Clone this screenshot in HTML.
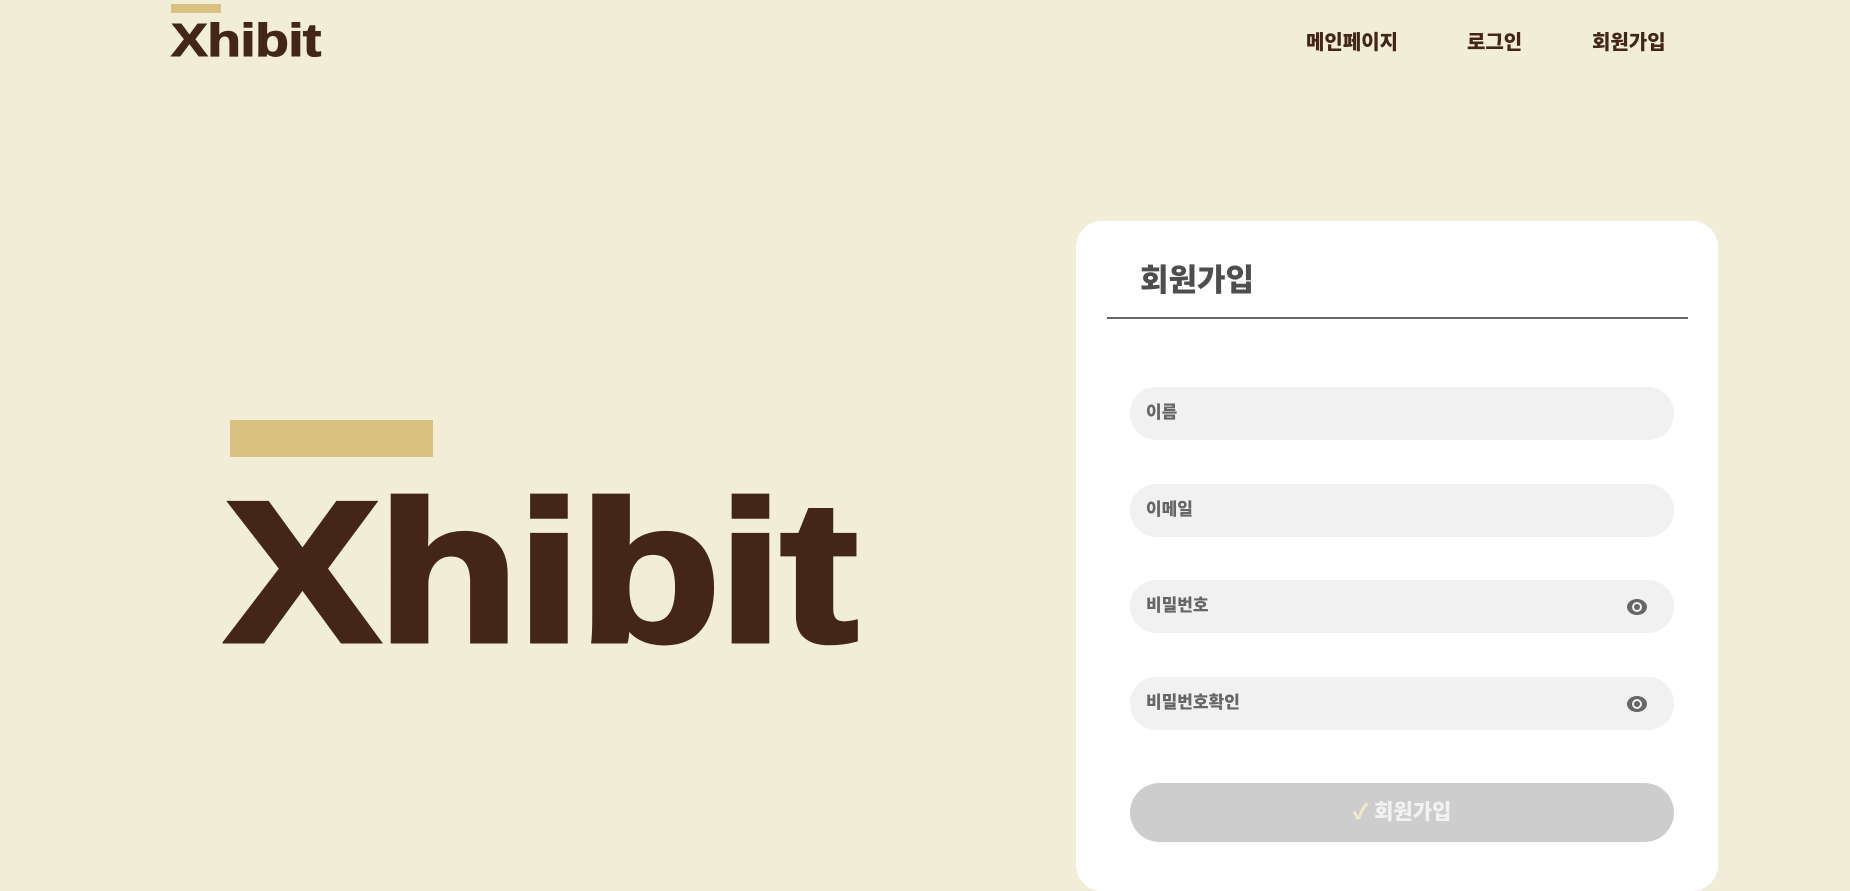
<!DOCTYPE html>
<html><head><meta charset="utf-8"><style>
*{margin:0;padding:0;box-sizing:border-box}
body{width:1850px;height:887px;background:#f2edd7;position:relative;overflow:hidden;font-family:"Liberation Sans","Noto Sans CJK KR",sans-serif}
.abs{position:absolute}
.logo{left:171px;top:10px;font-size:46px;font-weight:bold;color:#432616;transform:scaleX(1.2);transform-origin:left top;line-height:60px;letter-spacing:-0.5px;-webkit-text-stroke:1px #432616}
.nav{top:28px;font-size:20px;font-weight:900;color:#432616;line-height:30px}
.big{left:225px;top:463px;font-size:200px;font-weight:bold;color:#432616;line-height:220px;transform:scaleX(1.16);transform-origin:left top;letter-spacing:-2px;-webkit-text-stroke:5px #432616}
.card{left:1076px;top:221px;width:642px;height:670px;background:#fff;border-radius:26px}
.title{left:1140px;top:261px;font-size:31px;font-weight:900;color:#4e4e4e;line-height:40px}
.line{left:1107px;top:317px;width:581px;height:2px;background:#666}
.inp{left:1130px;width:544px;height:53px;background:#f1f1f1;border-radius:26px}
.lbl{position:absolute;left:16px;top:12px;font-size:17px;font-weight:900;color:#666;line-height:28px}
.eye{position:absolute;right:26px;top:16px;width:22px;height:22px}
.btn{left:1130px;top:783px;width:544px;height:59px;background:#cdcdcd;border-radius:30px;text-align:center;line-height:59px;font-size:21px;font-weight:900;color:#f2f2f2}
</style></head><body>
<div class="abs" style="left:171px;top:4px;width:50px;height:9px;background:#d9c182"></div>
<div class="abs logo">Xhibit</div>
<div class="abs nav" style="left:1306px">메인페이지</div>
<div class="abs nav" style="left:1467px">로그인</div>
<div class="abs nav" style="left:1592px">회원가입</div>
<div class="abs" style="left:230px;top:420px;width:203px;height:37px;background:#d9c182"></div>
<div class="abs big">Xhibit</div>
<div class="abs card"></div>
<div class="abs title">회원가입</div>
<div class="abs line"></div>
<div class="abs inp" style="top:387px"><span class="lbl">이름</span></div>
<div class="abs inp" style="top:484px"><span class="lbl">이메일</span></div>
<div class="abs inp" style="top:580px"><span class="lbl">비밀번호</span>
<svg class="eye" viewBox="0 0 22 22"><ellipse cx="11" cy="11" rx="10" ry="8" fill="#666"/><circle cx="11" cy="11" r="5" fill="#f1f1f1"/><circle cx="11" cy="11" r="3" fill="#666"/></svg></div>
<div class="abs inp" style="top:677px"><span class="lbl">비밀번호확인</span>
<svg class="eye" viewBox="0 0 22 22"><ellipse cx="11" cy="11" rx="10" ry="8" fill="#666"/><circle cx="11" cy="11" r="5" fill="#f1f1f1"/><circle cx="11" cy="11" r="3" fill="#666"/></svg></div>
<div class="abs btn"><span style="color:#f3ebc8">✓</span> 회원가입</div>
</body></html>
